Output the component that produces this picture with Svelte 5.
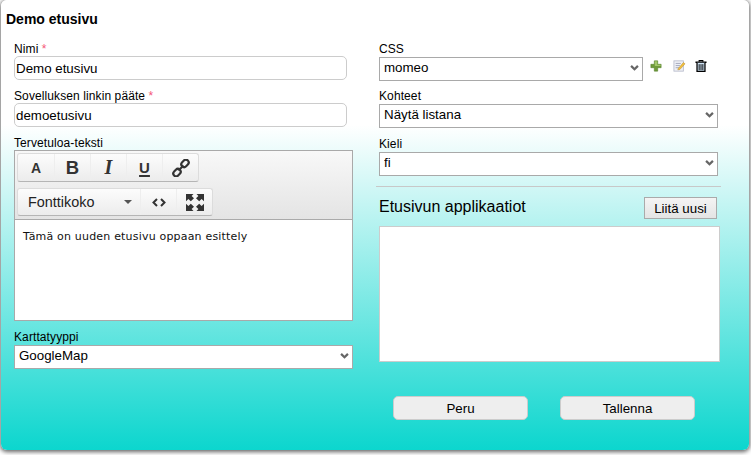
<script>
	let name = 'Demo etusivu';
	let slug = 'demoetusivu';
</script>

<div class="page">
	<div class="panel">
		<h1>Demo etusivu</h1>
		<div class="columns">
			<div class="left">
				<label class="field tf">
					<span class="lbl">Nimi <b class="req">*</b></span>
					<input class="text" type="text" bind:value={name} />
				</label>
				<label class="field tf">
					<span class="lbl">Sovelluksen linkin pääte <b class="req">*</b></span>
					<input class="text" type="text" bind:value={slug} />
				</label>

				<div class="field">
					<span class="lbl">Tervetuloa-teksti</span>
					<div class="editor">
						<div class="toolbar">
							<div class="group">
								<button class="tb gl small">A</button>
								<button class="tb gl big">B</button>
								<button class="tb gl ital">I</button>
								<button class="tb gl under">U</button>
								<button class="tb" aria-label="Linkki">
									<svg width="18" height="18" viewBox="0 0 18 18" fill="none" stroke="#333" stroke-width="2.2">
										<rect x="9" y="1.6" width="8" height="5.6" rx="2.8" transform="rotate(-45 13 4.4)" />
										<rect x="1" y="10.8" width="8" height="5.6" rx="2.8" transform="rotate(-45 5 13.6)" />
										<path d="M6.5 11.5 L11.5 6.5" />
									</svg>
								</button>
							</div>
							<div class="group second">
								<button class="tb font">Fonttikoko<i class="caret"></i></button>
								<button class="tb" aria-label="Koodi">
									<svg width="14" height="9" viewBox="0 0 14 9" fill="none" stroke="#333" stroke-width="2">
										<path d="M5 1 L1.5 4.5 L5 8 M9 1 L12.5 4.5 L9 8" />
									</svg>
								</button>
								<button class="tb" aria-label="Koko näyttö">
									<svg width="18" height="17" viewBox="0 0 18 17" fill="#333">
										<path d="M0 0 H7.5 L5.6 1.9 L8 4.3 L4.8 7.3 L2.4 5 L0 7.3 Z" />
										<path d="M18 0 H10.5 L12.4 1.9 L10 4.3 L13.2 7.3 L15.6 5 L18 7.3 Z" />
										<path d="M0 17 H7.5 L5.6 15.1 L8 12.7 L4.8 9.7 L2.4 12 L0 9.7 Z" />
										<path d="M18 17 H10.5 L12.4 15.1 L10 12.7 L13.2 9.7 L15.6 12 L18 9.7 Z" />
									</svg>
								</button>
							</div>
						</div>
						<div class="content">Tämä on uuden etusivu oppaan esittely</div>
					</div>
				</div>

				<label class="field map">
					<span class="lbl">Karttatyyppi</span>
					<span class="sel">
						<select><option>GoogleMap</option></select>
						<svg class="chev" width="9" height="6" viewBox="0 0 10 7" fill="none" stroke="#666" stroke-width="2.6"><path d="M1 1 L5 5 L9 1" /></svg>
					</span>
				</label>
			</div>

			<div class="right">
				<div class="inner">
					<div class="field">
						<span class="lbl">CSS</span>
						<div class="cssrow">
							<span class="sel css">
								<select><option>momeo</option></select>
								<svg class="chev" width="9" height="6" viewBox="0 0 10 7" fill="none" stroke="#666" stroke-width="2.6"><path d="M1 1 L5 5 L9 1" /></svg>
							</span>
							<svg width="12" height="12" viewBox="0 0 14 14" class="plus">
								<path d="M5 1 H9 V5 H13 V9 H9 V13 H5 V9 H1 V5 H5 Z" fill="#6f9a3a" stroke="#4f7a26" stroke-width="0.6" />
								<path d="M5.6 1.6 H8.4 V5.6 H12.4 V7 H5.6 Z" fill="#a3c76a" />
							</svg>
							<svg width="13" height="12" viewBox="0 0 15 14" class="edit">
								<rect x="1" y="1" width="11" height="12" fill="#eef0f6" stroke="#b8bccb" />
								<path d="M3 4 H9 M3 6.5 H8 M3 9 H7" stroke="#9aa0b5" />
								<path d="M6 10 L12 3 L14 4.5 L8 11 L5.5 11.5 Z" fill="#f0c040" stroke="#b08020" stroke-width="0.5" />
							</svg>
							<svg width="12" height="12" viewBox="0 0 12 13" class="trash" fill="none" stroke="#000">
								<path d="M0 2.5 H12" stroke-width="1.6" />
								<path d="M4 2 V0.7 H8 V2" stroke-width="1.2" />
								<path d="M1.7 3 V12.4 H10.3 V3" stroke-width="1.4" fill="#cfe4f5" />
								<path d="M4 4.5 V11 M6 4.5 V11 M8 4.5 V11" stroke-width="1" />
							</svg>
						</div>
					</div>
					<label class="field roomy">
						<span class="lbl">Kohteet</span>
						<span class="sel">
							<select><option>Näytä listana</option></select>
							<svg class="chev" width="9" height="6" viewBox="0 0 10 7" fill="none" stroke="#666" stroke-width="2.6"><path d="M1 1 L5 5 L9 1" /></svg>
						</span>
					</label>
					<label class="field">
						<span class="lbl">Kieli</span>
						<span class="sel">
							<select><option>fi</option></select>
							<svg class="chev" width="9" height="6" viewBox="0 0 10 7" fill="none" stroke="#666" stroke-width="2.6"><path d="M1 1 L5 5 L9 1" /></svg>
						</span>
					</label>
				</div>
				<hr />
				<div class="apphead">
					<h2>Etusivun applikaatiot</h2>
					<button class="attach">Liitä uusi</button>
				</div>
				<div class="apps"></div>
				<div class="actions">
					<button class="act">Peru</button>
					<button class="act">Tallenna</button>
				</div>
			</div>
		</div>
	</div>
</div>

<style>
	:global(body) {
		background: #fff;
		overflow: hidden;
	}
	* {
		box-sizing: border-box;
		margin: 0;
		padding: 0;
	}
	.page {
		height: 455px;
		padding-left: 1px;
	}
	.panel {
		width: 748px;
		height: 450px;
		border-radius: 6px;
		background: linear-gradient(to bottom, #fff 0, #fff 125px, #0cd6ce 100%);
		box-shadow: 0 1px 4px 1px #666;
		font-family: 'Liberation Sans', Arial, sans-serif;
		color: #000;
		overflow: hidden;
	}
	h1 {
		font-size: 14px;
		line-height: 16px;
		font-weight: bold;
		padding: 11px 0 0 5px;
	}
	.columns {
		display: grid;
		grid-template-columns: 339px 342px;
		column-gap: 26px;
		padding: 15px 0 0 13px;
	}
	.field {
		display: block;
		margin-bottom: 8px;
	}
	.tf,
	.roomy {
		margin-bottom: 9px;
	}
	.lbl {
		display: block;
		font-size: 12px;
		line-height: 14px;
		height: 15px;
		letter-spacing: 0.1px;
	}
	.req {
		color: #f4577a;
		font-weight: normal;
		font-size: 12px;
	}
	.text {
		display: block;
		width: 333px;
		height: 24px;
		margin-top: -1px;
		border: 1px solid #ccc;
		border-radius: 5px;
		background: #fff;
		padding: 0 1px;
		font: 13.33px 'Liberation Sans', Arial, sans-serif;
		color: #000;
		outline: none;
	}
	.editor {
		width: 339px;
		height: 171px;
		margin-top: -1px;
		border: 1px solid #a9a9a9;
		background: #fff;
	}
	.toolbar {
		height: 69px;
		padding: 2px 0 0 2px;
		background: linear-gradient(to bottom, #f8f8f8, #e4e4e4);
		border-bottom: 1px solid #aaa;
	}
	.group {
		display: flex;
		width: max-content;
		height: 29px;
		border-radius: 3px;
		border: 1px solid #dcdcdc;
		border-bottom-color: #b5b5b5;
		background: linear-gradient(to bottom, #fcfcfc, #ececec);
		overflow: hidden;
	}
	.second {
		height: 28px;
		margin-top: 6px;
	}
	.tb {
		display: flex;
		align-items: center;
		justify-content: center;
		width: 36px;
		height: 100%;
		border: 0;
		border-left: 1px solid #eee;
		background: none;
		color: #333;
	}
	.tb:first-child {
		border-left: 0;
	}
	.gl {
		font-family: 'Liberation Sans', Arial, sans-serif;
		font-weight: bold;
	}
	.small {
		font-size: 14px;
	}
	.big {
		font-size: 18.5px;
	}
	.ital {
		font-style: italic;
		font-size: 20px;
		font-family: 'Liberation Serif', serif;
	}
	.under {
		font-size: 15px;
		text-decoration: underline;
		text-decoration-thickness: 2px;
		text-underline-offset: 2px;
	}
	.font {
		width: 122px;
		justify-content: flex-start;
		padding-left: 10px;
		font: 14.4px 'Liberation Sans', Arial, sans-serif;
		color: #222;
	}
	.caret {
		margin-left: 30px;
		border: 4px solid transparent;
		border-top: 4px solid #555;
		border-bottom: 0;
	}
	.content {
		padding: 10px 8px;
		font: 11px/14px 'DejaVu Sans', Verdana, sans-serif;
		letter-spacing: 0.19px;
		color: #111;
	}
	.map {
		margin-top: 9px;
	}
	.sel {
		display: block;
		position: relative;
	}
	.sel select {
		display: block;
		appearance: none;
		width: 100%;
		height: 24px;
		border: 1px solid #a9a9a9;
		border-radius: 0;
		background: #fff;
		padding: 0 0 3px 4px;
		font: 13.33px 'Liberation Sans', Arial, sans-serif;
		color: #000;
	}
	.chev {
		position: absolute;
		right: 4px;
		top: 8px;
		pointer-events: none;
	}
	.inner {
		width: 339px;
	}
	.cssrow {
		display: flex;
		align-items: center;
	}
	.css {
		width: 264px;
		flex: none;
	}
	.plus {
		margin: -6px 0 0 7px;
	}
	.edit {
		margin: -6px 0 0 11px;
	}
	.trash {
		margin: -6px 0 0 9px;
	}
	hr {
		width: 345px;
		margin: 10px 0 0 -3px;
		border: 0;
		border-top: 1px solid #c8c8c8;
	}
	.apphead {
		display: flex;
		justify-content: space-between;
		align-items: center;
		width: 338px;
		height: 28px;
		margin-top: 7px;
	}
	h2 {
		font-size: 16px;
		font-weight: normal;
		margin-top: -2px;
	}
	.attach {
		width: 73px;
		height: 22px;
		border: 1px solid #aaa;
		background: linear-gradient(to bottom, #f4f4f4, #e4e4e4);
		font: 13.33px 'Liberation Sans', Arial, sans-serif;
		color: #000;
	}
	.apps {
		width: 341px;
		height: 136px;
		margin-top: 4px;
		background: #fff;
		border: 1px solid #ccc;
	}
	.actions {
		display: flex;
		gap: 32px;
		padding: 34px 0 0 14px;
	}
	.act {
		width: 135px;
		height: 24px;
		border: 1px solid #ccc;
		border-radius: 5px;
		background: #eee;
		font: 13.33px 'Liberation Sans', Arial, sans-serif;
		color: #000;
	}
</style>
